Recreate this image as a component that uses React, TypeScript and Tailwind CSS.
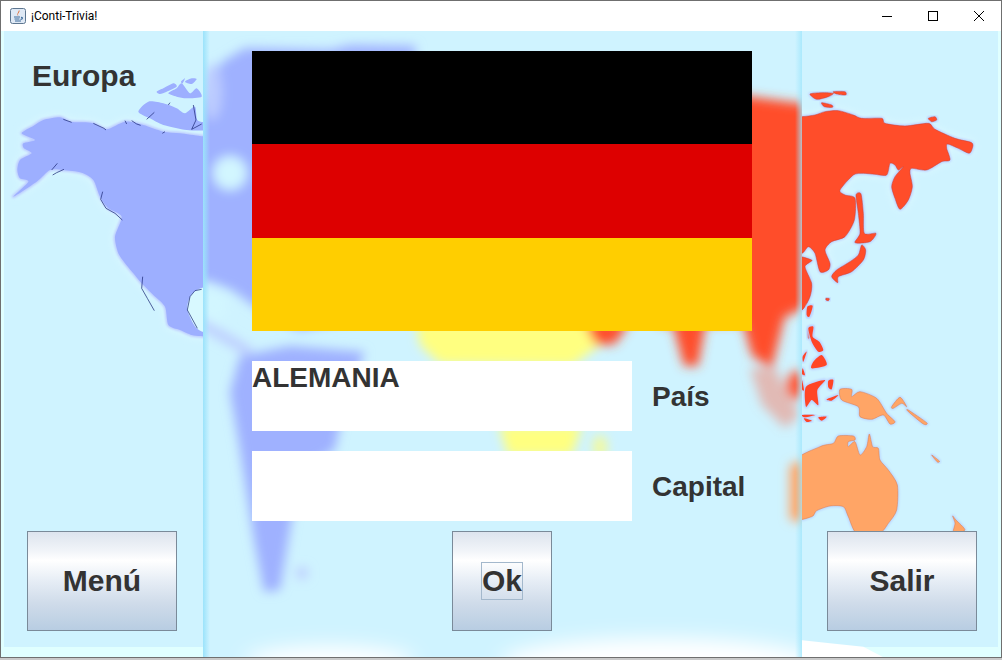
import React from "react";

const FONT = "font-['Liberation_Sans',Arial,sans-serif]";

// Turns a straight "M x y L x y ... Z" outline into a curved coastline
function smooth(d: string): string {
  const n = d.match(/-?\d+(\.\d+)?/g)!.map(Number);
  const p: [number, number][] = [];
  for (let i = 0; i + 1 < n.length; i += 2) p.push([n[i], n[i + 1]]);
  const L = p.length;
  let out = `M${p[0][0]} ${p[0][1]}`;
  for (let i = 0; i < L; i++) {
    const a = p[(i - 1 + L) % L], b = p[i], c = p[(i + 1) % L], e = p[(i + 2) % L];
    const k = 8;
    out += ` C${(b[0] + (c[0] - a[0]) / k).toFixed(1)} ${(b[1] + (c[1] - a[1]) / k).toFixed(1)} ${(c[0] - (e[0] - b[0]) / k).toFixed(1)} ${(c[1] - (e[1] - b[1]) / k).toFixed(1)} ${c[0]} ${c[1]}`;
  }
  return out + " Z";
}

function Land({ d, fill, stroke }: { d: string; fill: string; stroke?: string }) {
  return <path d={smooth(d)} fill={fill} stroke={stroke ?? "none"} strokeWidth={stroke ? 1.5 : 0} strokeLinejoin="round" />;
}

function Halo({ d, color }: { d: string; color: string }) {
  return <path d={smooth(d)} fill={color} stroke={color} strokeWidth="9" strokeLinejoin="round" filter="url(#halo)" />;
}

const NA_MAIN =
  "M65 160 L100 138 L130 120 L180 112 L210 125 L250 127 L280 130 L320 148 L375 125 L430 135 L490 155 L540 160 L600 168 L625 170 L640 190 L640 740 L625 768 L600 768 L575 765 L540 750 L505 735 L495 680 L460 645 L425 610 L400 580 L375 550 L355 520 L345 470 L365 410 L325 385 L300 350 L280 300 L245 278 L190 270 L150 270 L110 305 L40 350 L85 305 L60 295 L52 270 L60 240 L95 220 L72 205 L70 190 L105 180 Z";
const NA_GULF = "M630 628 L590 630 L570 650 L562 690 L590 745 L630 752 Z";
const NA_ISLES = [
  "M415 95 L445 65 L490 70 L530 85 L555 100 L585 80 L592 120 L620 130 L620 150 L560 150 L490 135 L450 115 Z",
  "M470 35 L490 25 L520 10 L530 20 L500 35 L480 42 Z",
  "M505 40 L530 25 L545 10 L570 40 L590 25 L605 50 L560 55 L530 50 Z",
  "M555 5 L575 -5 L590 -3 L575 12 Z",
  "M555 -5 L548 10 L543 5 Z",
];
const NA_LINES = [
  "M190 118 L215 127 M280 130 L312 145 L318 150 M375 122 L380 132 M395 122 L410 132 L422 136",
  "M155 270 L172 250 M158 285 L170 278 L192 268",
  "M308 335 L302 358 L318 385 L345 400 L367 420",
  "M428 590 L425 625 L442 655 L463 692",
  "M605 628 L585 632 L570 650 L562 690 L592 745",
  "M440 118 L463 97 M505 75 L510 68 M487 160 L495 155 M580 75 L588 120 L575 148 L605 132",
];
const ASIA = [
  "M-20 110 L21 110 L60 105 L90 95 L130 92 L175 105 L200 115 L260 115 L270 130 L330 138 L400 130 L420 148 L480 175 L530 188 L532 205 L522 220 L490 205 L458 192 L455 205 L465 240 L440 245 L395 270 L350 265 L345 280 L352 320 L340 360 L315 388 L300 355 L290 320 L300 290 L325 260 L310 270 L300 255 L285 250 L275 285 L240 283 L205 280 L175 285 L135 330 L150 345 L180 355 L178 420 L150 470 L110 485 L90 510 L105 550 L100 570 L75 575 L60 520 L40 500 L21 520 L-20 520 Z",
  "M183 345 L198 342 L205 400 L208 460 L243 460 L225 485 L180 488 L195 460 L190 400 Z",
  "M200 495 L212 510 L205 540 L170 575 L130 590 L128 608 L110 590 L125 570 L165 545 L190 525 Z",
  "M45 42 L80 38 L115 40 L100 50 L65 58 Z",
  "M115 35 L150 35 L152 45 L125 42 Z",
  "M80 68 L110 75 L112 82 L88 80 Z",
  "M400 115 L420 110 L425 120 L410 125 Z",
  "M-20 535 L50 540 L30 560 L50 610 L45 650 L21 690 L-20 690 Z",
  "M38 690 L52 680 L45 705 L38 710 Z",
  "M40 745 L55 742 L50 765 L40 775 Z",
  "M93 655 L103 656 L100 662 L93 660 Z",
];
const ISLANDS = [
  "M82 20 L98 18 L88 50 L80 45 Z",
  "M85 85 L100 80 L98 110 L118 125 L130 150 L115 155 L95 125 Z",
  "M100 185 L125 165 L140 195 L95 205 Z",
  "M78 260 L135 240 L112 270 L115 315 L95 300 L78 320 Z",
  "M145 242 L160 240 L155 268 L145 262 Z",
  "M140 298 L175 285 L155 302 Z",
  "M66 345 L105 345 L75 352 Z",
  "M72 355 L95 362 L80 366 Z",
  "M115 352 L140 350 L125 362 Z",
  "M68 170 L80 155 L70 185 Z",
  "M68 205 L75 225 L66 222 Z",
  "M66 240 L72 270 L66 268 Z",
];
const ORANGE = [
  "M180 268 L215 268 L215 290 L240 275 L290 295 L320 340 L345 365 L330 372 L310 345 L275 358 L240 350 L235 320 L185 300 Z",
  "M335 320 L360 292 L380 320 L365 310 L340 325 Z",
  "M385 330 L440 368 L430 372 L385 335 Z",
  "M455 465 L478 483 L472 486 Z",
  "M518 648 L528 660 L555 690 L520 700 L525 670 Z",
  "M40 490 L120 440 L160 430 L175 408 L220 408 L225 420 L205 425 L205 440 L225 425 L240 465 L260 440 L268 402 L278 440 L295 445 L300 480 L325 510 L352 555 L350 630 L325 670 L298 700 L230 700 L205 650 L190 620 L150 618 L110 632 L95 650 L40 650 Z",
];

function SharpMap() {
  return (
    <svg className="absolute inset-0" width="1000" height="626" viewBox="1 31 1000 626" aria-hidden="true">
      <defs>
        <filter id="wide" x="-30%" y="-30%" width="160%" height="160%"><feGaussianBlur stdDeviation="14" /></filter>
        <filter id="halo" x="-20%" y="-20%" width="140%" height="140%"><feGaussianBlur stdDeviation="3" /></filter>
        <filter id="soft"><feGaussianBlur stdDeviation="0.45" /></filter>
        <filter id="soft2"><feGaussianBlur stdDeviation="2" /></filter>
      </defs>
      <rect x="1" y="647" width="1000" height="10" fill="#e0ffff" />
      <rect x="1" y="31" width="3" height="626" fill="#e0ffff" />
      <rect x="998" y="31" width="3" height="626" fill="#e0ffff" />
      <g transform="translate(0 80) scale(.33333)">
        <path d={smooth(NA_MAIN)} fill="#e4fcff" filter="url(#wide)" />
        <Halo d={NA_MAIN} color="#bccbff" />
        <g filter="url(#soft)">
          <Land d={NA_MAIN} fill="#9dafff" />
          {NA_ISLES.map((d) => <Land key={d} d={d} fill="#9dafff" />)}
        </g>
        <path d={smooth(NA_GULF)} fill="#d8f9ff" />
        {NA_LINES.map((d) => <path key={d} d={d} fill="none" stroke="#1d2a78" strokeWidth="2.2" strokeLinejoin="round" />)}
      </g>
      <g transform="translate(795 80) scale(.33333)">
        <path d={smooth(ASIA[0])} fill="#e4fcff" filter="url(#wide)" />
        {ASIA.map((d) => <Halo key={d} d={d} color="#bcd0ff" />)}
        <g filter="url(#soft)">
          {ASIA.map((d) => <Land key={d} d={d} fill="#ff4e2a" stroke="#c93c38" />)}
        </g>
      </g>
      <g transform="translate(780 300) scale(.33333)">
        {ISLANDS.map((d) => <Halo key={d} d={d} color="#bcd0ff" />)}
        {ORANGE.map((d) => <Halo key={d} d={d} color="#bcd8ff" />)}
        <g filter="url(#soft)">
          {ISLANDS.map((d) => <Land key={d} d={d} fill="#ff4428" />)}
          {ORANGE.map((d) => <Land key={d} d={d} fill="#ffa566" stroke="#d9784e" />)}
        </g>
        <path d="M60 1020 L150 1030 L250 1040 L310 1072 L60 1072 Z" fill="#ffffff" filter="url(#soft2)" />
      </g>
    </svg>
  );
}

function BlurMap() {
  return (
    <svg className="absolute inset-0" width="599" height="626" viewBox="203 31 599 626" aria-hidden="true">
      <defs>
        <filter id="b6" x="-20%" y="-20%" width="140%" height="140%"><feGaussianBlur stdDeviation="5.5" /></filter>
        <filter id="b12" x="-30%" y="-60%" width="160%" height="220%"><feGaussianBlur stdDeviation="10" /></filter>
      </defs>
      <g filter="url(#b6)">
        <path d="M180 130 L222 62 L245 48 L330 50 L350 45 L416 46 L410 100 L440 300 L300 330 L262 312 L232 290 L205 280 L180 290 Z" fill="#9fb1ff" />
        <ellipse cx="212" cy="92" rx="10" ry="28" fill="#bcccff" />
        <ellipse cx="230" cy="173" rx="17" ry="17" fill="#d2f6ff" />
        <ellipse cx="214" cy="306" rx="13" ry="19" fill="#d2f6ff" />
        <path d="M198 322 L250 352" stroke="#bccbff" strokeWidth="9" fill="none" />
        <path d="M240 356 L290 346 L365 352 L345 400 L335 450 L300 470 L290 530 L280 590 L264 592 L254 540 L240 450 L230 392 Z" fill="#9fb1ff" />
        <circle cx="302" cy="573" r="6" fill="#bccbff" />
        <path d="M416 322 L604 322 L604 342 L572 366 L440 364 L420 345 Z" fill="#ffff80" />
        <path d="M499 425 L582 425 L572 456 L508 456 Z" fill="#ffff80" />
        <ellipse cx="600" cy="447" rx="7" ry="12" fill="#f4fa9a" />
        <path d="M700 90 L820 106 L820 300 L775 322 L660 325 L660 100 Z" fill="#ff4e2a" />
        <path d="M584 322 L630 322 L615 344 L596 345 Z" fill="#ff4e2a" />
        <path d="M672 322 L706 322 L698 366 L684 366 Z" fill="#ff4e2a" />
        <path d="M742 320 L785 315 L772 368 L752 356 Z" fill="#ff4e2a" />
        <path d="M750 368 L775 368 L800 415 L785 428 L762 405 Z" fill="#f08a78" opacity=".55" />
        <ellipse cx="797" cy="385" rx="10" ry="14" fill="#ff5a3a" />
        <path d="M790 465 L815 458 L815 522 L790 520 Z" fill="#ffa566" />
      </g>
      <g filter="url(#b12)">
        <ellipse cx="330" cy="662" rx="85" ry="16" fill="#ffffff" />
        <ellipse cx="660" cy="664" rx="160" ry="26" fill="#ffffff" />
      </g>
    </svg>
  );
}

function JavaIcon() {
  return (
    <svg width="16" height="16" viewBox="0 0 16 16" aria-hidden="true">
      <rect x=".5" y=".5" width="15" height="15" rx="2" fill="#dfe9f5" stroke="#5d7690" />
      <path d="M9 2 C11 4 6.5 5.5 8.5 8 C6 6.5 8.5 4.5 9 2 Z" fill="#e0662a" />
      <path d="M4 9 H10 M4.5 11 H9.5 M5 13 H11 M11 9.5 C13 9 13 11 10.5 11.5" fill="none" stroke="#3f6d9c" strokeWidth="1.1" />
    </svg>
  );
}

function MetalButton({ label, width, focus }: { label: string; width: string; focus?: boolean }) {
  return (
    <div
      className={`${width} flex h-[100px] items-center justify-center border border-[#7a8a99] bg-[linear-gradient(180deg,#dde4ee_0%,#f2f5f9_20%,#ffffff_29%,#e6edf5_50%,#d0dcea_72%,#b8cde2_100%)] text-[30px] font-bold leading-none text-[#333333]`}
    >
      {focus ? (
        <span className="flex h-[38px] w-[42px] items-center justify-center border border-[#a3b8cc]">{label}</span>
      ) : (
        label
      )}
    </div>
  );
}

export default function App() {
  return (
    <div className={`${FONT} h-[660px] w-[1002px] overflow-hidden bg-[#c9c9c9]`}>
      <div className="flex h-[658px] w-[1002px] flex-col border border-[#6f6f6f] bg-white">
        <header className="flex h-[30px] shrink-0 items-center bg-white">
          <div className="ml-[9px] flex items-center gap-[5px]">
            <JavaIcon />
            <span className="font-['Roboto',sans-serif] text-[12px] text-black">¡Conti-Trivia!</span>
          </div>
          <div className="ml-auto flex h-full">
            <div className="flex w-[46px] items-center justify-center">
              <svg width="10" height="10" viewBox="0 0 10 10"><path d="M0 5.5 H10" stroke="#000" /></svg>
            </div>
            <div className="flex w-[46px] items-center justify-center">
              <svg width="10" height="10" viewBox="0 0 10 10"><rect x=".5" y=".5" width="9" height="9" fill="none" stroke="#000" /></svg>
            </div>
            <div className="flex w-[45px] items-center justify-center">
              <svg width="10" height="10" viewBox="0 0 10 10"><path d="M0 0 L10 10 M10 0 L0 10" stroke="#000" /></svg>
            </div>
          </div>
        </header>

        <div className="relative flex min-h-0 flex-1 bg-[#cff3ff]">
          <SharpMap />

          <aside className="relative flex w-[202px] shrink-0 flex-col justify-between pb-[26px] pl-[26px]">
            <span className="pl-[5px] pt-[28px] text-[30px] font-bold leading-[34px] text-[#333333]">Europa</span>
            <MetalButton label="Menú" width="w-[150px]" />
          </aside>

          <main className="relative flex w-[599px] shrink-0 flex-col overflow-hidden bg-[#cff3ff] pb-[26px] pl-[49px] pt-[20px]">
            <BlurMap />
            <div className="pointer-events-none absolute inset-y-0 left-0 w-[7px] bg-gradient-to-r from-[#9be3fb] to-transparent" />
            <div className="pointer-events-none absolute inset-y-0 right-0 w-[7px] bg-gradient-to-l from-[#9fe6fc]/75 to-transparent" />

            <div className="relative flex h-[280px] w-[500px] flex-col">
              <div className="h-[93px] bg-black" />
              <div className="h-[94px] bg-[#dd0000]" />
              <div className="h-[93px] bg-[#ffce00]" />
            </div>

            <div className="relative mt-[30px] flex h-[70px] items-center gap-[20px]">
              <div className="h-full w-[380px] bg-white text-[28px] font-bold leading-[34px] text-[#333333]">ALEMANIA</div>
              <span className="pt-[2px] text-[28px] font-bold leading-[32px] text-[#333333]">País</span>
            </div>

            <div className="relative mt-[20px] flex h-[70px] items-center gap-[20px]">
              <div className="h-full w-[380px] bg-white" />
              <span className="pt-[2px] text-[28px] font-bold leading-[32px] text-[#333333]">Capital</span>
            </div>

            <div className="relative mt-[10px] flex w-[500px] justify-center">
              <MetalButton label="Ok" width="w-[100px]" focus />
            </div>
          </main>

          <aside className="relative flex flex-1 flex-col justify-end pb-[26px] pl-[25px]">
            <MetalButton label="Salir" width="w-[150px]" />
          </aside>
        </div>
      </div>
    </div>
  );
}
